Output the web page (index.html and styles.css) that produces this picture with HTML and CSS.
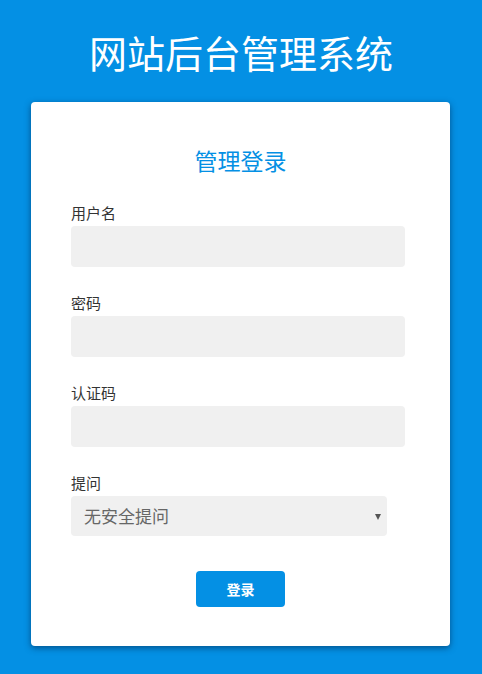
FILE: index.html
```html
<!DOCTYPE html>
<html lang="zh-CN">
<head>
<meta charset="utf-8">
<title>网站后台管理系统</title>
<link rel="stylesheet" href="styles.css">
</head>
<body>
<div class="page">
  <h1 class="site-title">网站后台管理系统</h1>
  <div class="card">
    <h2 class="card-title">管理登录</h2>
    <form class="form">
      <div class="field">
        <label class="label">用户名</label>
        <input class="input" type="text">
      </div>
      <div class="field">
        <label class="label">密码</label>
        <input class="input" type="password">
      </div>
      <div class="field">
        <label class="label">认证码</label>
        <input class="input" type="text">
      </div>
      <div class="field">
        <label class="label">提问</label>
        <div class="select">
          <span class="select-text">无安全提问</span>
          <span class="select-arrow"></span>
        </div>
      </div>
      <div class="actions">
        <button class="btn" type="button">登录</button>
      </div>
    </form>
  </div>
</div>
</body>
</html>
```

FILE: styles.css
```css
html, body {
  margin: 0;
  padding: 0;
  background: #0490e4;
  font-family: "Noto Sans CJK SC", "Noto Sans", sans-serif;
}
.page {
  width: 482px;
  height: 674px;
  padding-top: 26px;
  box-sizing: border-box;
}
.site-title {
  margin: 0;
  text-align: center;
  color: #fff;
  font-size: 38px;
  font-weight: 400;
  line-height: 52px;
}
.card {
  margin: 24px 0 0 31px;
  width: 419px;
  height: 544px;
  box-sizing: border-box;
  background: #fff;
  border-radius: 4px;
  box-shadow: 0 2px 6px rgba(0, 40, 80, 0.6);
  padding: 43px 0 0 40px;
}
.card-title {
  margin: 0 0 28px -40px;
  text-align: center;
  color: #0490e4;
  font-size: 23px;
  font-weight: 400;
  line-height: 30px;
}
.form {
  display: flex;
  flex-direction: column;
}
.field {
  display: flex;
  flex-direction: column;
  margin-bottom: 26px;
}
.label {
  color: #333;
  font-size: 15px;
  line-height: 20px;
  margin-bottom: 3px;
}
.input {
  width: 334px;
  height: 41px;
  box-sizing: border-box;
  border: none;
  border-radius: 4px;
  background: #f0f0f0;
  margin: 0;
  padding: 0 12px;
  outline: none;
}
.select {
  width: 316px;
  height: 40px;
  box-sizing: border-box;
  border-radius: 4px;
  background: #f0f0f0;
  display: flex;
  align-items: center;
  justify-content: space-between;
  padding: 0 6px 0 13px;
}
.select-text {
  color: #666;
  font-size: 17px;
  line-height: 20px;
}
.select-arrow {
  width: 0;
  height: 0;
  border-left: 3.5px solid transparent;
  border-right: 3.5px solid transparent;
  border-top: 6px solid #555;
  margin-top: 2px;
}
.actions {
  display: flex;
  justify-content: center;
  margin-left: -40px;
  margin-top: 9px;
}
.btn {
  width: 89px;
  height: 36px;
  border: none;
  border-radius: 4px;
  background: #0490e4;
  color: #fff;
  font-family: "Noto Sans CJK SC", sans-serif;
  font-size: 14px;
  font-weight: 700;
  padding: 0;
  margin-left: 0;
}
```
